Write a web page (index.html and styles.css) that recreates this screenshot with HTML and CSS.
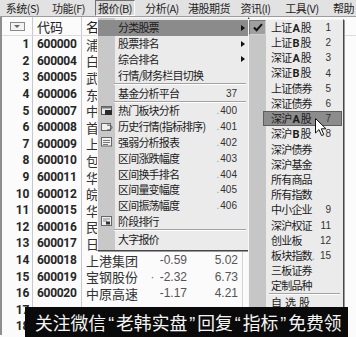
FILE: index.html
```html
<!DOCTYPE html>
<html lang="zh">
<head>
<meta charset="utf-8">
<title>报价 菜单</title>
<link rel="stylesheet" href="styles.css">
</head>
<body>
<div class="screen">
  <div class="menubar">
    <span class="mb">系统(S)</span>
    <span class="mb">功能(F)</span>
    <span class="mb on">报价(B)</span>
    <span class="mb">分析(A)</span>
    <span class="mb">港股期货</span>
    <span class="mb">资讯(I)</span>
    <span class="mb">工具(V)</span>
    <span class="mb last">帮助</span>
  </div>

  <div class="table">
    <div class="row head">
      <div class="c num"><span class="hbox"><span class="tri"></span></span></div>
      <div class="c code">代码</div>
      <div class="c name">名称</div>
      <div class="c dot"></div>
      <div class="c chg"></div>
      <div class="c price"></div>
      <div class="c rest"></div>
    </div>
    <div class="row"><div class="c num">1</div><div class="c code">600000</div><div class="c name">浦</div><div class="c dot"></div><div class="c chg"></div><div class="c price"></div><div class="c rest"></div></div>
    <div class="row"><div class="c num">2</div><div class="c code">600004</div><div class="c name">白</div><div class="c dot"></div><div class="c chg"></div><div class="c price"></div><div class="c rest"></div></div>
    <div class="row"><div class="c num">3</div><div class="c code">600005</div><div class="c name">武</div><div class="c dot"></div><div class="c chg"></div><div class="c price"></div><div class="c rest"></div></div>
    <div class="row"><div class="c num">4</div><div class="c code">600006</div><div class="c name">东</div><div class="c dot"></div><div class="c chg"></div><div class="c price"></div><div class="c rest"></div></div>
    <div class="row"><div class="c num">5</div><div class="c code">600007</div><div class="c name">中</div><div class="c dot"></div><div class="c chg"></div><div class="c price"></div><div class="c rest"></div></div>
    <div class="row"><div class="c num">6</div><div class="c code">600008</div><div class="c name">首</div><div class="c dot"></div><div class="c chg"></div><div class="c price"></div><div class="c rest"></div></div>
    <div class="row"><div class="c num">7</div><div class="c code">600009</div><div class="c name">上</div><div class="c dot"></div><div class="c chg"></div><div class="c price"></div><div class="c rest"></div></div>
    <div class="row"><div class="c num">8</div><div class="c code">600010</div><div class="c name">包</div><div class="c dot"></div><div class="c chg"></div><div class="c price"></div><div class="c rest"></div></div>
    <div class="row"><div class="c num">9</div><div class="c code">600011</div><div class="c name">华</div><div class="c dot"></div><div class="c chg"></div><div class="c price"></div><div class="c rest"></div></div>
    <div class="row"><div class="c num">10</div><div class="c code">600012</div><div class="c name">皖</div><div class="c dot"></div><div class="c chg"></div><div class="c price"></div><div class="c rest"></div></div>
    <div class="row"><div class="c num">11</div><div class="c code">600015</div><div class="c name">华</div><div class="c dot"></div><div class="c chg"></div><div class="c price"></div><div class="c rest"></div></div>
    <div class="row"><div class="c num">12</div><div class="c code">600016</div><div class="c name">民</div><div class="c dot"></div><div class="c chg"></div><div class="c price"></div><div class="c rest"></div></div>
    <div class="row"><div class="c num">13</div><div class="c code">600017</div><div class="c name">日</div><div class="c dot"></div><div class="c chg"></div><div class="c price"></div><div class="c rest"></div></div>
    <div class="row"><div class="c num">14</div><div class="c code">600018</div><div class="c name">上港集团</div><div class="c dot"></div><div class="c chg">-0.59</div><div class="c price">5.02</div><div class="c rest"></div></div>
    <div class="row"><div class="c num">15</div><div class="c code">600019</div><div class="c name">宝钢股份</div><div class="c dot">·</div><div class="c chg">-2.32</div><div class="c price">6.73</div><div class="c rest"></div></div>
    <div class="row"><div class="c num">16</div><div class="c code">600020</div><div class="c name">中原高速</div><div class="c dot"></div><div class="c chg">-1.17</div><div class="c price">4.21</div><div class="c rest"></div></div>
    <div class="row"><div class="c num">17</div><div class="c code"></div><div class="c name"></div><div class="c dot"></div><div class="c chg"></div><div class="c price"></div><div class="c rest"></div></div>
    <div class="row"><div class="c num">18</div><div class="c code"></div><div class="c name"></div><div class="c dot"></div><div class="c chg"></div><div class="c price"></div><div class="c rest"></div></div>
  </div>

  <div class="menu main">
    <div class="mi hot"><span class="ico"></span><span class="lbl">分类股票</span><span class="acc"></span><span class="arr"><i></i></span></div>
    <div class="mi"><span class="ico"></span><span class="lbl">股票排名</span><span class="acc"></span><span class="arr"><i></i></span></div>
    <div class="mi"><span class="ico"></span><span class="lbl">综合排名</span><span class="acc"></span><span class="arr"><i></i></span></div>
    <div class="mi"><span class="ico"></span><span class="lbl">行情/财务栏目切换</span><span class="acc"></span><span class="arr"></span></div>
    <div class="sep"></div>
    <div class="mi"><span class="ico"></span><span class="lbl">基金分析平台</span><span class="acc">37</span><span class="arr"></span></div>
    <div class="sep"></div>
    <div class="mi"><span class="ico"><svg width="12" height="10" viewBox="0 0 12 10"><rect x="0.5" y="0.5" width="10" height="8" fill="#e8e8e8" stroke="#555"/><rect x="0.5" y="0.5" width="10" height="2" fill="#777"/><rect x="4" y="4" width="7" height="5" fill="#2a2a2a"/></svg></span><span class="lbl">热门板块分析</span><span class="acc"><em>.</em>400</span><span class="arr"></span></div>
    <div class="mi"><span class="ico"><svg width="12" height="10" viewBox="0 0 12 10"><rect x="0.5" y="1.5" width="9" height="7" fill="#f0f0f0" stroke="#666"/><path d="M6 3 Q11 3 11 5.5 Q11 8 6 8" fill="none" stroke="#555"/></svg></span><span class="lbl">历史行情(指标排序)</span><span class="acc"><em>.</em>401</span><span class="arr"></span></div>
    <div class="mi"><span class="ico"><svg width="12" height="10" viewBox="0 0 12 10"><rect x="0.5" y="0.5" width="10" height="8.5" fill="#f2f2f2" stroke="#666"/><path d="M2 3.5H9M2 5.5H9M2 7.5H7" stroke="#777"/></svg></span><span class="lbl">强弱分析报表</span><span class="acc"><em>.</em>402</span><span class="arr"></span></div>
    <div class="mi"><span class="ico"></span><span class="lbl">区间涨跌幅度</span><span class="acc"><em>.</em>403</span><span class="arr"></span></div>
    <div class="mi"><span class="ico"></span><span class="lbl">区间换手排名</span><span class="acc"><em>.</em>404</span><span class="arr"></span></div>
    <div class="mi"><span class="ico"></span><span class="lbl">区间量变幅度</span><span class="acc"><em>.</em>405</span><span class="arr"></span></div>
    <div class="mi"><span class="ico"></span><span class="lbl">区间振荡幅度</span><span class="acc"><em>.</em>406</span><span class="arr"></span></div>
    <div class="mi"><span class="ico"><svg width="12" height="11" viewBox="0 0 12 11"><rect x="0.5" y="0.5" width="10" height="9" fill="#eee" stroke="#666"/><path d="M2 3H9M2 5H6" stroke="#888"/><rect x="5" y="5.5" width="4" height="3" fill="#333"/></svg></span><span class="lbl">阶段排行</span><span class="acc"></span><span class="arr"></span></div>
    <div class="sep"></div>
    <div class="mi"><span class="ico"></span><span class="lbl">大字报价</span><span class="acc"></span><span class="arr"></span></div>
  </div>

  <div class="menu sub">
    <div class="mi"><span class="ico chk"><svg width="10" height="9" viewBox="0 0 10 9"><path d="M1 4.5 L3.6 7.2 L9 1.2" fill="none" stroke="#111" stroke-width="2"/></svg></span><span class="body"><span class="lbl">上证<b>A</b>股</span><span class="acc">1</span></span></div>
    <div class="mi"><span class="ico"></span><span class="body"><span class="lbl">上证<b>B</b>股</span><span class="acc">2</span></span></div>
    <div class="mi"><span class="ico"></span><span class="body"><span class="lbl">深证<b>A</b>股</span><span class="acc">3</span></span></div>
    <div class="mi"><span class="ico"></span><span class="body"><span class="lbl">深证<b>B</b>股</span><span class="acc">4</span></span></div>
    <div class="mi"><span class="ico"></span><span class="body"><span class="lbl">上证债券</span><span class="acc">5</span></span></div>
    <div class="mi"><span class="ico"></span><span class="body"><span class="lbl">深证债券</span><span class="acc">6</span></span></div>
    <div class="mi sel"><span class="ico"></span><span class="body"><span class="lbl">深沪<b>A</b>股</span><span class="acc">7</span></span></div>
    <div class="mi"><span class="ico"></span><span class="body"><span class="lbl">深沪<b>B</b>股</span><span class="acc">8</span></span></div>
    <div class="mi"><span class="ico"></span><span class="body"><span class="lbl">深沪债券</span><span class="acc"></span></span></div>
    <div class="mi"><span class="ico"></span><span class="body"><span class="lbl">深沪基金</span><span class="acc"></span></span></div>
    <div class="mi"><span class="ico"></span><span class="body"><span class="lbl">所有商品</span><span class="acc"></span></span></div>
    <div class="mi"><span class="ico"></span><span class="body"><span class="lbl">所有指数</span><span class="acc"></span></span></div>
    <div class="mi"><span class="ico"></span><span class="body"><span class="lbl">中小企业</span><span class="acc">9</span></span></div>
    <div class="mi"><span class="ico"></span><span class="body"><span class="lbl">深沪权证</span><span class="acc">11</span></span></div>
    <div class="mi"><span class="ico"></span><span class="body"><span class="lbl">创业板</span><span class="acc">12</span></span></div>
    <div class="mi"><span class="ico"></span><span class="body"><span class="lbl">板块指数<em>.</em></span><span class="acc">15</span></span></div>
    <div class="mi"><span class="ico"></span><span class="body"><span class="lbl">三板证券</span><span class="acc"></span></span></div>
    <div class="mi"><span class="ico"></span><span class="body"><span class="lbl">定制品种</span><span class="acc"></span></span></div>
    <div class="sep"></div>
    <div class="mi"><span class="ico"></span><span class="body"><span class="lbl spaced">自选股</span><span class="acc"></span></span></div>
  </div>

  <svg class="cursor" width="12" height="19" viewBox="0 0 12 19"><path d="M0.5 0.5 L0.5 15 L4 11.6 L6.6 17.6 L8.8 16.6 L6.3 10.8 L11 10.8 Z" fill="#fff" stroke="#111" stroke-width="1" stroke-linejoin="round"/></svg>

  <div class="banner">关注微信<span class="q">“</span>老韩实盘<span class="q">”</span>回复<span class="q">“</span>指标<span class="q">”</span>免费领</div>
</div>
</body>
</html>
```

FILE: styles.css
```css
* { box-sizing: border-box; margin: 0; padding: 0; }
html, body { width: 356px; height: 337px; overflow: hidden; }
body {
  background: #fff;
  font-family: "Noto Sans CJK SC", "Liberation Sans", sans-serif;
  color: #1e1e1e;
}
.screen {
  position: relative;
  width: 356px;
  height: 337px;
  overflow: hidden;
  background: #fbfbfb;
}

/* menu bar */
.menubar {
  display: grid;
  grid-template-columns: 45px 47px 46px 48px 46px 47px 46px 31px;
  align-items: center;
  justify-items: center;
  height: 17px;
  background: #e2e2e2;
  border-bottom: 1px solid #9c9c9c;
  font-size: 11px;
  letter-spacing: -0.5px;
  color: #222;
}
.mb { line-height: 14px; border: 1px solid transparent; white-space: nowrap; }
.mb.on {
  width: 40px;
  text-align: center;
  border-color: #707070 #fafafa #fafafa #707070;
  background: #dadada;
}
.mb.last { justify-self: end; padding-right: 1px; }

/* table */
.table { border-left: 2px solid #8e8e8e; }
.row {
  display: grid;
  grid-template-columns: 31px 49px 63px 15px 32px 51px 1fr;
  height: 16.6px;
}
.row.head { height: 19px; border-bottom: 1px solid #dcdcdc; }
.c {
  display: flex;
  align-items: center;
  overflow: hidden;
  white-space: nowrap;
  line-height: 1;
}
.num, .code {
  font-family: "Roboto", "Liberation Sans", sans-serif;
  font-weight: 700;
  font-size: 12px;
  letter-spacing: -0.3px;
  color: #262626;
  border-right: 1px solid #c9c9c9;
}
.num { justify-content: flex-end; padding-right: 3px; }
.code { padding-left: 4px; }
.name { padding-left: 4px; font-size: 13px; color: #333; }
.dot { justify-content: center; font-family: "Liberation Sans", sans-serif; font-size: 12px; color: #777; }
.chg, .price {
  justify-content: flex-end;
  padding-right: 5px;
  font-family: "Liberation Sans", sans-serif;
  font-size: 12px;
  color: #555;
}
.price { border-right: 1px solid #d2d2d2; padding-right: 4px; }
.rest { font-size: 13px; color: #333; padding-left: 4px; }
.head .code, .head .name { font-family: "Noto Sans CJK SC", sans-serif; font-weight: 400; font-size: 13px; letter-spacing: 0; color: #222; }
.head .num { justify-content: center; padding-right: 0; }
.hbox {
  width: 15px;
  height: 9px;
  border: 1px solid #8a8a8a;
  background: #f3f3f3;
  display: flex;
  align-items: center;
  justify-content: center;
}
.tri { border-top: 3px solid #666; border-left: 3px solid transparent; border-right: 3px solid transparent; }

/* menus */
.menu {
  position: absolute;
  border: 1px solid;
  border-color: #f6f6f6 #474747 #474747 #f6f6f6;
  box-shadow: 1px 1px 0 #9a9a9a;
  font-size: 11px;
  letter-spacing: -0.8px;
  color: #1b1b1b;
}
.menu .mi { display: flex; align-items: center; white-space: nowrap; }
.menu .ico { flex: none; display: flex; align-items: center; justify-content: center; }
.menu .lbl { flex: 1; line-height: 1; }
.menu .lbl.spaced { letter-spacing: 3px; }
.menu .acc { font-family: "Liberation Sans", sans-serif; font-size: 10px; color: #333; letter-spacing: 0; }
.menu em { font-style: normal; color: #999; margin-right: 1px; }
.menu b { font-family: "Roboto", "Liberation Sans", sans-serif; font-weight: 700; font-size: 11px; letter-spacing: 0; margin: 0 1px; }

.main {
  left: 97px;
  top: 17px;
  width: 152px;
  padding: 2px 0 3px;
  background: linear-gradient(to right, #c8c8c8 17px, #ebebeb 17px);
}
.main .mi { height: 15.8px; }
.main .ico { width: 17px; }
.main .lbl { padding-left: 3px; }
.main .arr { flex: none; width: 11px; display: flex; justify-content: center; }
.main .arr i {
  border-left: 4px solid #111;
  border-top: 3px solid transparent;
  border-bottom: 3px solid transparent;
}
.main .mi.hot { background: #8b8b8b; }
.sep {
  height: 2px;
  border-top: 1px solid #a2a2a2;
  border-bottom: 1px solid #fdfdfd;
}
.main .sep { margin: 0 2px 0 16px; }

.sub {
  left: 248px;
  top: 19px;
  width: 96px;
  height: 330px;
  background: linear-gradient(to right, #c6c6c6 17px, #ebebeb 17px);
}
.sub .mi { height: 15.2px; }
.sub .ico { width: 14px; height: 100%; }
.sub .ico.chk { width: 17px; background: #9f9f9f; border: 1px solid #7a7a7a; border-right-color: #d0d0d0; border-bottom-color: #d0d0d0; }
.sub .body {
  flex: 1;
  height: 100%;
  display: flex;
  align-items: center;
  padding-left: 8px;
  padding-right: 12px;
}
.sub .ico.chk + .body { padding-left: 5px; }
.sub .mi.sel .body { background: #8c8c8c; outline: 1px solid #5e5e5e; outline-offset: -1px; margin-right: 1px; padding-right: 11px; }
.sub .sep { margin: 0 3px 0 20px; }

.cursor { position: absolute; left: 315px; top: 118px; }

.banner {
  position: absolute;
  left: 25px;
  top: 307px;
  width: 323px;
  height: 30px;
  background: #0a0a0a;
  color: #f4f4f4;
  font-size: 17.8px;
  line-height: 30px;
  padding-left: 10px;
  white-space: nowrap;
  overflow: hidden;
}
.banner .q { font-family: "Liberation Sans", sans-serif; margin: 0 2px; }
```
